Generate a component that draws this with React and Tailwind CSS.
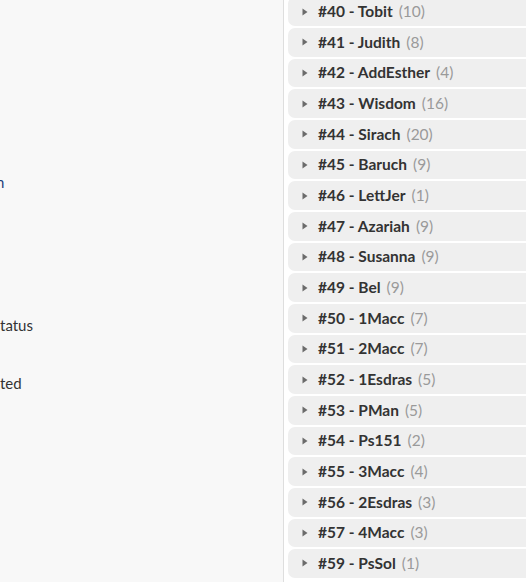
import React from 'react';

const books = [
  ['40', 'Tobit', 10],
  ['41', 'Judith', 8],
  ['42', 'AddEsther', 4],
  ['43', 'Wisdom', 16],
  ['44', 'Sirach', 20],
  ['45', 'Baruch', 9],
  ['46', 'LettJer', 1],
  ['47', 'Azariah', 9],
  ['48', 'Susanna', 9],
  ['49', 'Bel', 9],
  ['50', '1Macc', 7],
  ['51', '2Macc', 7],
  ['52', '1Esdras', 5],
  ['53', 'PMan', 5],
  ['54', 'Ps151', 2],
  ['55', '3Macc', 4],
  ['56', '2Esdras', 3],
  ['57', '4Macc', 3],
  ['59', 'PsSol', 1],
];

function Caret() {
  return (
    <svg width="6" height="8" viewBox="0 0 6 8" className="shrink-0">
      <path d="M0.5 0.5 L5.5 4 L0.5 7.5 Z" fill="#6b6b6b" />
    </svg>
  );
}

function BookRow({ num, name, count }) {
  return (
    <div className="flex h-[28.67px] items-center rounded-l-[7px] bg-[#efefef] pl-[14px]">
      <Caret />
      <span className="ml-[10px] font-bold text-[#333]">#{num} - {name}</span>
      <span className="ml-[6px] text-[#9a9a9a]">({count})</span>
    </div>
  );
}

export default function App() {
  return (
    <div
      className="flex h-[582px] w-[526px] overflow-hidden bg-white text-[15.5px]"
      style={{ fontFamily: '"Source Sans Pro", Lato, "Noto Sans", sans-serif' }}
    >
      {/* left side, mostly cut off */}
      <div className="relative w-[283px] shrink-0 overflow-hidden bg-[#f8f8f8] text-[15px] text-[#333]">
        <div className="flex flex-col">
          <div className="mt-[171px] -ml-[4px] leading-[22px] text-[#1f3f7a]">n</div>
          <div className="mt-[121px] leading-[22px]">tatus</div>
          <div className="mt-[36px] leading-[22px]">ted</div>
        </div>
      </div>
      <div className="w-px shrink-0 bg-[#dedede]" />

      {/* book list */}
      <div className="flex-1 pl-[4px]">
        <div className="-mt-[2.67px] flex flex-col gap-[2px]">
          {books.map(([num, name, count]) => (
            <BookRow key={num} num={num} name={name} count={count} />
          ))}
        </div>
      </div>
    </div>
  );
}
